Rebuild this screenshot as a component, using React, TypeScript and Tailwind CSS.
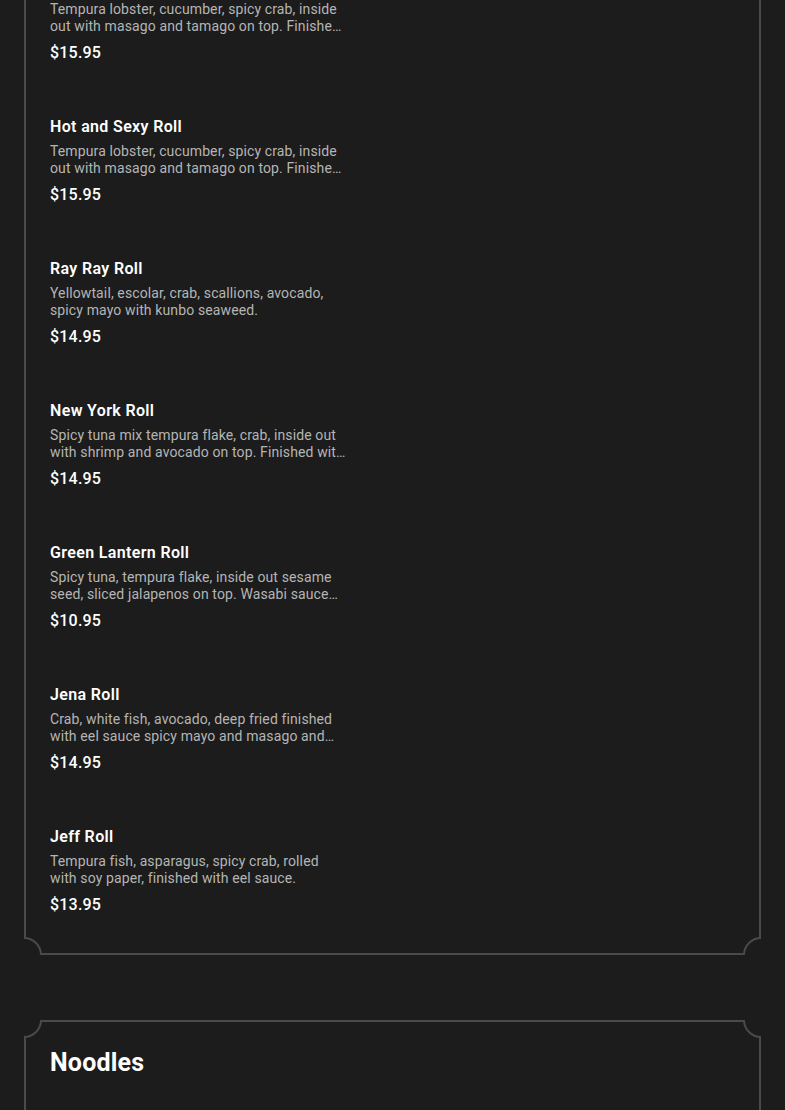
const rolls = [
  {
    name: "Lobster Roll",
    desc: "Tempura lobster, cucumber, spicy crab, inside out with masago and tamago on top. Finished with eel sauce and spicy mayo.",
    price: "$15.95",
  },
  {
    name: "Hot and Sexy Roll",
    desc: "Tempura lobster, cucumber, spicy crab, inside out with masago and tamago on top. Finished with eel sauce and spicy mayo.",
    price: "$15.95",
  },
  {
    name: "Ray Ray Roll",
    desc: "Yellowtail, escolar, crab, scallions, avocado, spicy mayo with kunbo seaweed.",
    price: "$14.95",
  },
  {
    name: "New York Roll",
    desc: "Spicy tuna mix tempura flake, crab, inside out with shrimp and avocado on top. Finished with eel sauce.",
    price: "$14.95",
  },
  {
    name: "Green Lantern Roll",
    desc: "Spicy tuna, tempura flake, inside out sesame seed, sliced jalapenos on top. Wasabi sauce and eel sauce.",
    price: "$10.95",
  },
  {
    name: "Jena Roll",
    desc: "Crab, white fish, avocado, deep fried finished with eel sauce spicy mayo and masago and scallions.",
    price: "$14.95",
  },
  {
    name: "Jeff Roll",
    desc: "Tempura fish, asparagus, spicy crab, rolled with soy paper, finished with eel sauce.",
    price: "$13.95",
  },
];

// notched frame corners, clipped by the wrapper
function Corners() {
  const c =
    "absolute w-[36px] h-[36px] rounded-full border-2 border-[#4a4a4a] bg-[#1c1c1c]";
  return (
    <>
      <span className={`${c} -left-[18px] -top-[18px]`} />
      <span className={`${c} -right-[18px] -top-[18px]`} />
      <span className={`${c} -left-[18px] -bottom-[18px]`} />
      <span className={`${c} -right-[18px] -bottom-[18px]`} />
    </>
  );
}

function Card({ children, className = "" }: { children: React.ReactNode; className?: string }) {
  return (
    <div className={`relative overflow-hidden ${className}`}>
      <div className="border-2 border-[#4a4a4a] bg-[#1c1c1c]">{children}</div>
      <Corners />
    </div>
  );
}

function Item({ name, desc, price }: { name: string; desc: string; price: string }) {
  return (
    <div className="flex flex-col">
      <h3 className="text-[16px] leading-[20px] font-semibold tracking-[0.35px] text-white">
        {name}
      </h3>
      <p className="mt-[6px] w-[296px] text-[14px] leading-[17px] tracking-[0.12px] text-[#b5b5b5] line-clamp-2">
        {desc}
      </p>
      <p className="mt-[8px] text-[16px] leading-[20px] font-medium tracking-[0.2px] text-white">
        {price}
      </p>
    </div>
  );
}

export default function App() {
  return (
    <div
      className="min-h-[1110px] bg-[#1c1c1c] px-6 overflow-hidden"
      style={{ fontFamily: "Roboto, 'Liberation Sans', sans-serif" }}
    >
      <div className="-mt-[51px]">
        <Card>
          <div className="flex flex-col gap-[54px] px-6 pt-6 pb-[38px]">
            {rolls.map((r) => (
              <Item key={r.name} {...r} />
            ))}
          </div>
        </Card>
        <Card className="mt-[65px]">
          <div className="px-6 pt-[25px] pb-10">
            <h2 className="text-[25px] leading-[32px] font-bold tracking-[0.2px] text-white">
              Noodles
            </h2>
            <div className="h-[200px]" />
          </div>
        </Card>
      </div>
    </div>
  );
}
